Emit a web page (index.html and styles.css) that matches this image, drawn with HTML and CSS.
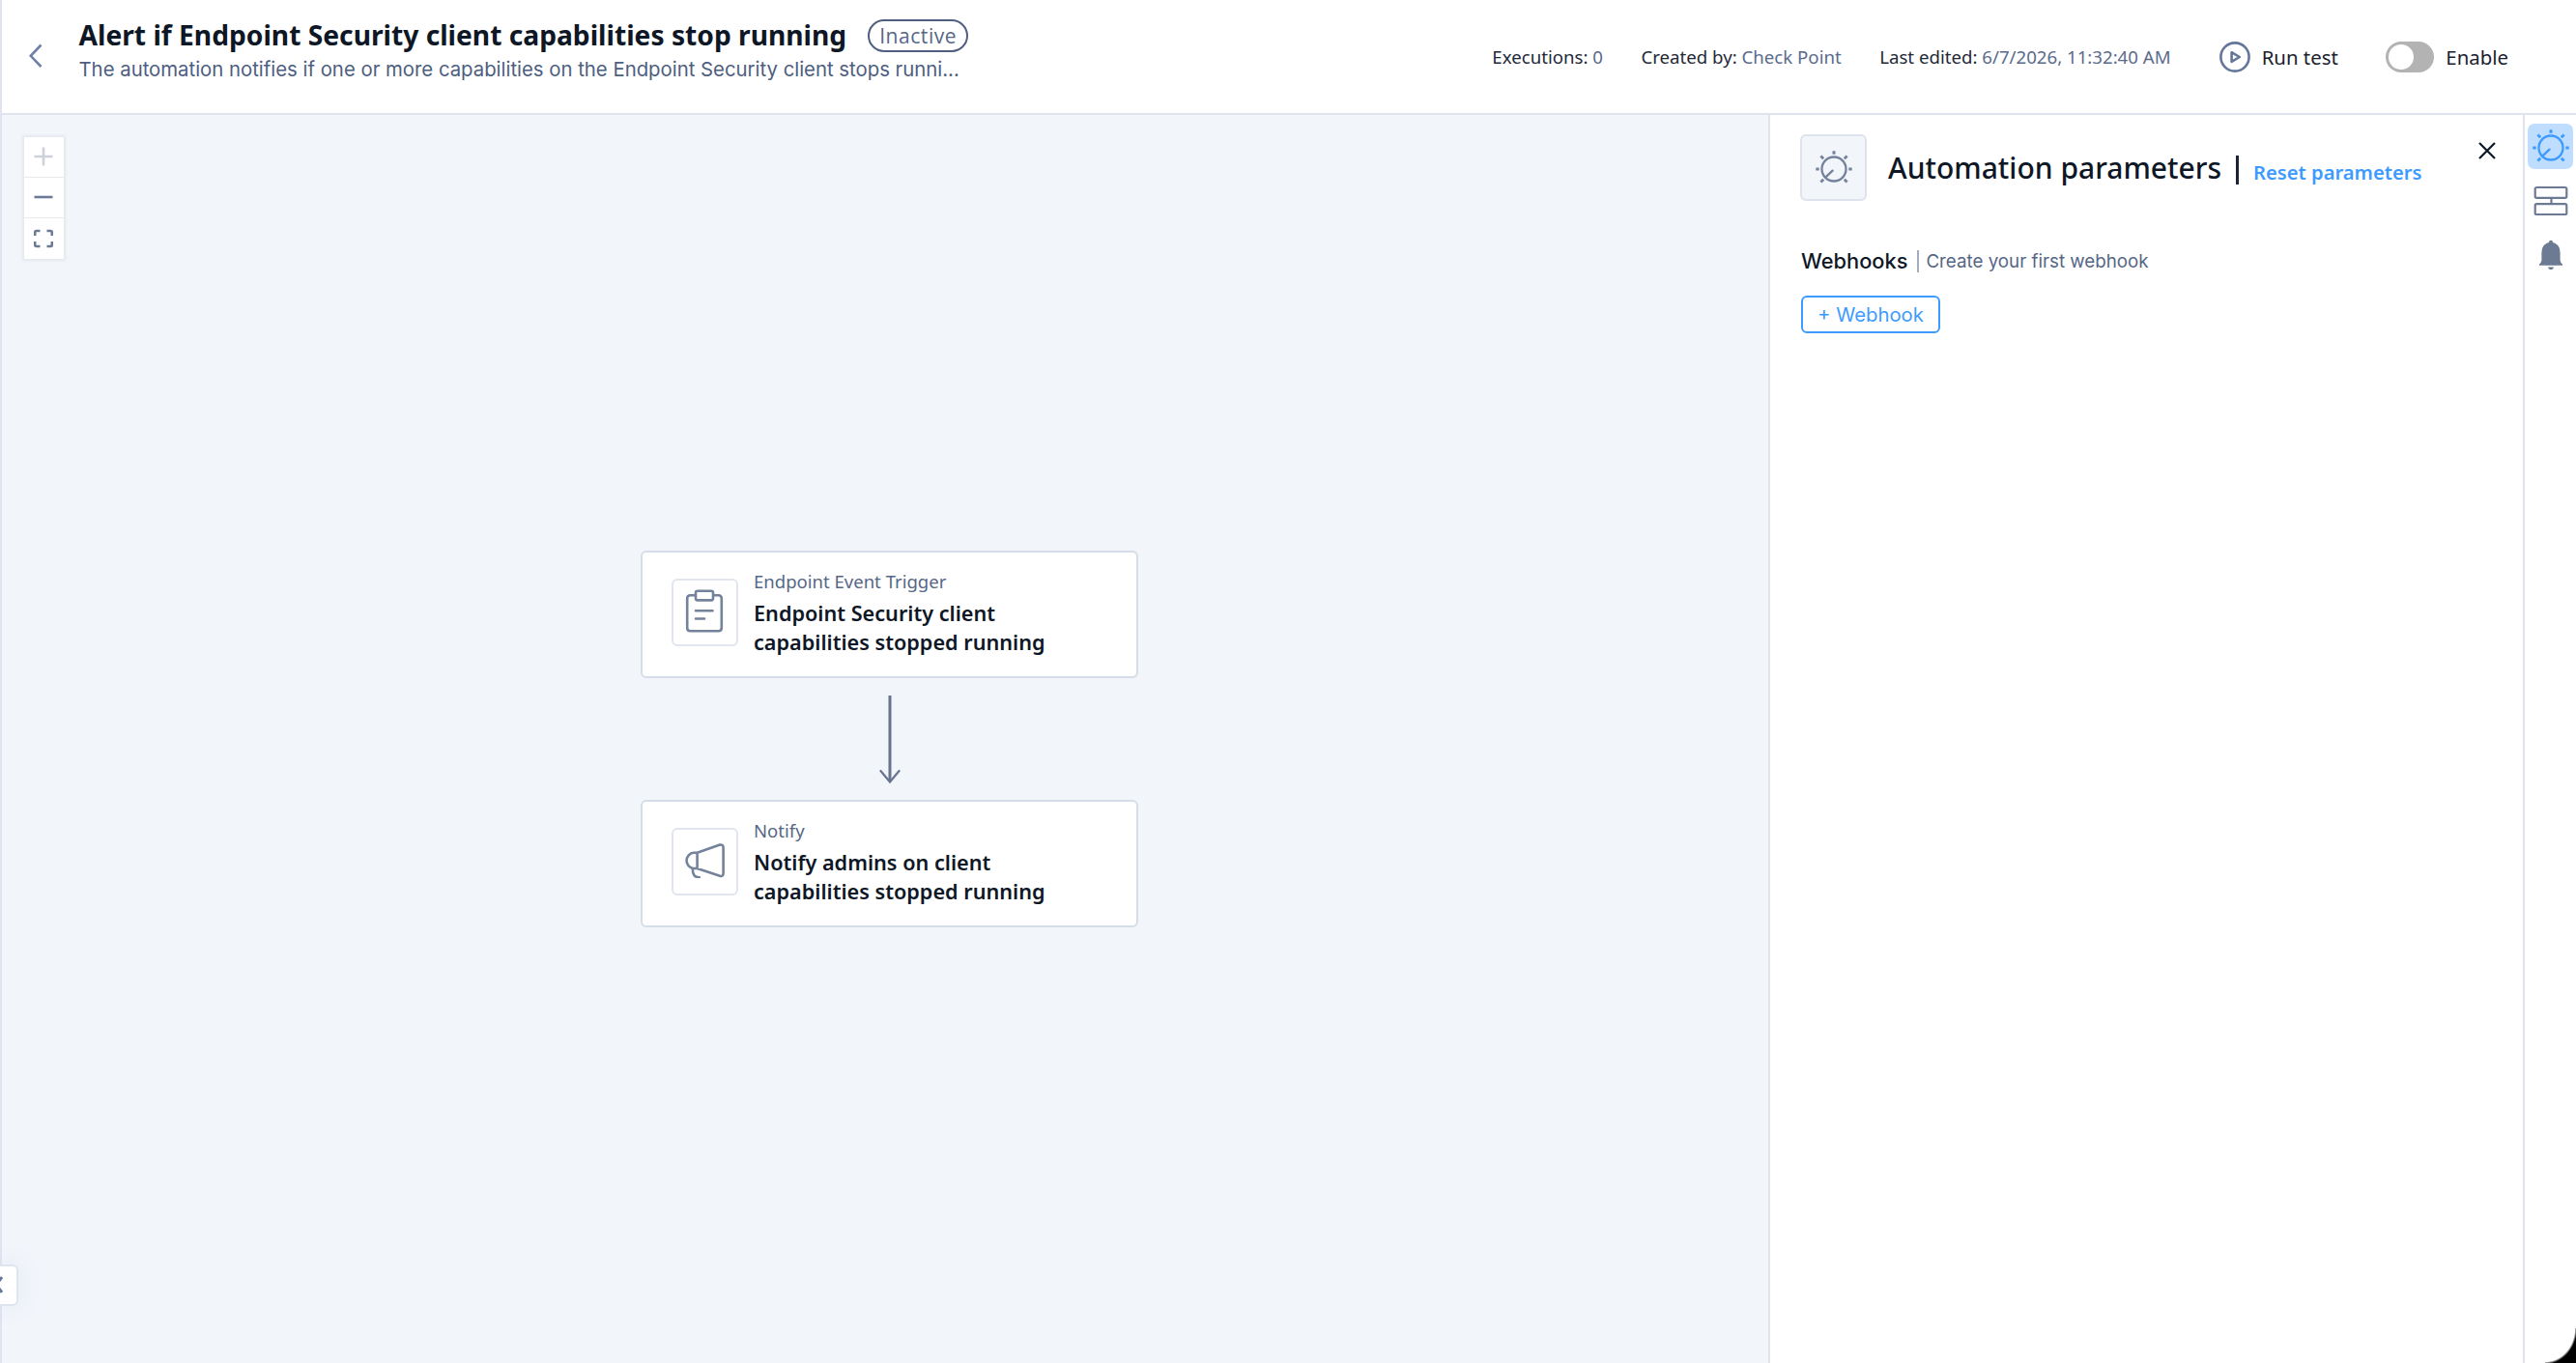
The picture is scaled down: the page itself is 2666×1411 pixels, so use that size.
FILE: index.html
```html
<!DOCTYPE html>
<html lang="en">
<head>
  <meta charset="UTF-8" />
  <meta name="viewport" content="width=device-width, initial-scale=1.0" />
  <title>Alert if Endpoint Security client capabilities stop running</title>
  <link rel="stylesheet" href="styles.css">
</head>
<body>

  <svg class="sprite" width="0" height="0">
    <symbol id="knob" viewBox="0 0 38 34">
      <g fill="none" stroke="currentColor" stroke-width="2.3">
        <circle cx="19" cy="19" r="12.5" />
        <path d="M11 26.8L17.6 20.6" stroke-linecap="round" />
      </g>
      <g fill="currentColor">
        <rect x="17.5" y="0.3" width="3" height="3.4" rx="0.5" />
        <rect x="0.3" y="17.5" width="3.4" height="3" rx="0.5" />
        <rect x="34.3" y="17.5" width="3.4" height="3" rx="0.5" />
      </g>
      <g stroke="currentColor" stroke-width="2.8">
        <path d="M5.4 5.4L8.2 8.2M32.6 5.4L29.8 8.2M5.4 32.6L8.2 29.8M32.6 32.6L29.8 29.8" />
      </g>
    </symbol>
  </svg>

  <div class="app">
    <header class="header">
      <button class="back" aria-label="Back">
        <svg width="14" height="26" viewBox="0 0 14 26"><path d="M12.5 1.5L1.8 12.8L12.5 24" /></svg>
      </button>
      <div class="heading">
        <div class="title-row">
          <h1>Alert if Endpoint Security client capabilities stop running</h1>
          <span class="badge">Inactive</span>
        </div>
        <p class="description">The automation notifies if one or more capabilities on the Endpoint Security client stops runni...</p>
      </div>
      <div class="meta">
        <span>Executions: <b>0</b></span>
        <span>Created by: <b>Check Point</b></span>
        <span>Last edited: <b>6/7/2026, 11:32:40 AM</b></span>
      </div>
      <button class="run">
        <svg width="32" height="32" viewBox="0 0 32 32">
          <circle cx="16" cy="16" r="14.6" />
          <path d="M12.6 11.2L20.8 16L12.6 20.8Z" />
        </svg>
        Run test
      </button>
      <label class="enable"><span class="toggle"></span>Enable</label>
    </header>

    <main class="main">
      <section class="canvas">
        <div class="zoom-controls">
          <button class="disabled" aria-label="Zoom in">
            <svg width="20" height="20" viewBox="0 0 20 20"><path d="M0.5 10H19.5M10 0.5V19.5" /></svg>
          </button>
          <button aria-label="Zoom out">
            <svg width="20" height="20" viewBox="0 0 20 20"><path d="M0.5 10H19.5" /></svg>
          </button>
          <button aria-label="Fit view">
            <svg width="20" height="20" viewBox="0 0 20 20"><path d="M1.2 7V3.6Q1.2 2 2.8 2H6.5M13.5 2H17.2Q18.8 2 18.8 3.6V7M18.8 13V16.4Q18.8 18 17.2 18H13.5M6.5 18H2.8Q1.2 18 1.2 16.4V13" /></svg>
          </button>
        </div>

        <div class="flow">
          <div class="node">
            <div class="node-icon">
              <svg width="40" height="46" viewBox="0 0 40 46">
                <path d="M10.5 6.3H5.5Q2.2 6.3 2.2 9.6V40Q2.2 43.3 5.5 43.3H34.5Q37.8 43.3 37.8 40V9.6Q37.8 6.3 34.5 6.3H29.5" />
                <rect x="11" y="1.8" width="18" height="9.6" rx="1.8" />
                <path d="M11 22.2H28.5M11 30.5H20" stroke-linecap="round" />
              </svg>
            </div>
            <div class="node-text">
              <div class="node-type">Endpoint Event Trigger</div>
              <div class="node-name">Endpoint Security client capabilities stopped running</div>
            </div>
          </div>

          <svg class="arrow" width="24" height="94" viewBox="0 0 24 94">
            <path d="M12 1V90" stroke-width="3" />
            <path d="M2.4 79L12 90.5L21.6 79" stroke-width="2.2" stroke-linecap="round" />
          </svg>

          <div class="node">
            <div class="node-icon">
              <svg width="42" height="36" viewBox="0 0 42 36">
                <path d="M13.6 9.8H9.5A8.2 8.2 0 0 0 9.5 26H13.6ZM13.6 9.8L37 1.6Q40.6 1 40.6 4.4V31Q40.6 34.6 37 33.8L13.6 26" />
                <path d="M8.8 26.2Q8.6 35.6 15.8 35.2" stroke-linecap="round" />
              </svg>
            </div>
            <div class="node-text">
              <div class="node-type">Notify</div>
              <div class="node-name">Notify admins on client capabilities stopped running</div>
            </div>
          </div>
        </div>

        <button class="collapse" aria-label="Expand menu">
          <svg width="6" height="22" viewBox="0 0 6 22"><path d="M-4 11L2 3.2M-4 11L2 18.8" /></svg>
        </button>
      </section>

      <aside class="panel">
        <div class="panel-head">
          <div class="panel-icon"><svg width="38" height="34"><use href="#knob" /></svg></div>
          <h2>Automation parameters</h2>
          <span class="bar"></span>
          <a class="reset">Reset parameters</a>
          <button class="close" aria-label="Close">
            <svg width="18" height="18" viewBox="0 0 18 18"><path d="M1 1L17 17M17 1L1 17" /></svg>
          </button>
        </div>
        <div class="webhooks">
          <h3>Webhooks</h3>
          <span class="hint">Create your first webhook</span>
        </div>
        <button class="add">+ Webhook</button>
      </aside>

      <nav class="rail">
        <button class="rail-item active" aria-label="Parameters"><svg width="38" height="34"><use href="#knob" /></svg></button>
        <button class="rail-item" aria-label="Steps">
          <svg width="36" height="32" viewBox="0 0 36 32" fill="none" stroke="currentColor" stroke-width="2.2">
            <rect x="1.7" y="2" width="32.6" height="10.8" rx="1.6" />
            <rect x="1.7" y="19.2" width="32.6" height="10.8" rx="1.6" />
            <path d="M18.5 12.8V19.2" />
          </svg>
        </button>
        <button class="rail-item" aria-label="Alerts">
          <svg width="26" height="32" viewBox="0 0 26 32" fill="currentColor">
            <path d="M11 3V2.6Q11 0.8 13 0.8T15 2.6V3Q22.6 5 22.6 13.4V21.4Q22.8 23.4 25 25.6V26.8H1V25.6Q3.2 23.4 3.4 21.4V13.4Q3.4 5 11 3Z" />
            <path d="M10 28.6H16Q15.6 31.2 13 31.2T10 28.6Z" />
          </svg>
        </button>
      </nav>
    </main>
    <div class="corner"></div>
  </div>

</body>
</html>
```
FILE: styles.css
```css
* {
  box-sizing: border-box;
}

body {
  margin: 0;
  font-family: "Noto Sans", sans-serif;
  color: #0e1726;
  background: #fff;
}

h1, h2, h3, p {
  margin: 0;
}

button {
  padding: 0;
  border: 0;
  background: none;
  font: inherit;
  color: inherit;
}

svg {
  display: block;
  flex: none;
}

.sprite {
  display: none;
}

.app {
  position: relative;
  display: flex;
  flex-direction: column;
  width: 2666px;
  height: 1411px;
  overflow: hidden;
}

/* header */
.header {
  display: flex;
  align-items: center;
  height: 119px;
  flex: none;
  padding: 0 70px 0 28px;
  border-left: 2px solid #dfe4ef;
  border-bottom: 2px solid #dfe4ee;
  white-space: nowrap;
}

.back svg {
  margin-bottom: 2px;
  fill: none;
  stroke: #7081a6;
  stroke-width: 2.6;
}

.heading {
  align-self: flex-start;
  margin-left: 37.5px;
  padding-top: 17px;
}

.title-row {
  display: flex;
  align-items: center;
  height: 39px;
}

h1 {
  font-size: 28.2px;
  font-weight: 700;
  line-height: 39px;
}

.badge {
  display: flex;
  align-items: center;
  justify-content: center;
  width: 104px;
  height: 34px;
  margin-left: 22px;
  border: 2px solid #4e5f80;
  border-radius: 17px;
  font-family: "Open Sans", sans-serif;
  font-size: 21px;
  letter-spacing: 0.55px;
  color: #566786;
}

.description {
  font-family: Inter, sans-serif;
  font-size: 20.33px;
  line-height: 32px;
  color: #4d5e7f;
}

.meta {
  display: flex;
  gap: 39.5px;
  margin-left: auto;
  font-size: 18.65px;
  color: #1f2937;
}

.meta b {
  font-weight: 400;
  color: #5a6b8c;
}

.run,
.enable {
  display: flex;
  align-items: center;
  gap: 12px;
  font-size: 20.4px;
  color: #1a2230;
}

.run {
  margin-left: 50px;
}

.run svg {
  fill: none;
  stroke: #64769a;
  stroke-width: 2.6;
  stroke-linejoin: round;
}

.enable {
  margin-left: 49.5px;
}

.toggle {
  width: 50px;
  height: 32px;
  padding: 3px;
  border-radius: 16px;
  background: #b3b3b3;
}

.toggle::before {
  content: "";
  display: block;
  width: 26px;
  height: 26px;
  border-radius: 50%;
  background: #fff;
}

.main {
  display: flex;
  flex: 1;
  min-height: 0;
}

/* canvas */
.canvas {
  position: relative;
  flex: 1;
  border-left: 2px solid #dfe4ef;
  background: #f2f5fa;
}

.zoom-controls {
  position: absolute;
  left: 23px;
  top: 23px;
  width: 41px;
  background: #fff;
  box-shadow: 0 0 3px 2px rgba(0, 0, 0, 0.06);
}

.zoom-controls button {
  display: flex;
  align-items: center;
  justify-content: center;
  width: 100%;
  height: 42px;
  padding: 0 1px 1px 0;
  border-bottom: 1px solid #e9eaec;
}

.zoom-controls button:last-child {
  border-bottom: 0;
}

.zoom-controls svg {
  fill: none;
  stroke: #6b7a95;
  stroke-width: 2.6;
}

.zoom-controls .disabled svg {
  stroke: #ccd1da;
}

.flow {
  position: absolute;
  left: 661px;
  top: 451px;
  display: flex;
  flex-direction: column;
  align-items: center;
}

.node {
  display: flex;
  width: 515px;
  height: 132px;
  padding: 20px 30px;
  border: 2px solid #d5dde8;
  border-radius: 6px;
  background: #fff;
}

.node-icon {
  display: flex;
  align-items: center;
  justify-content: center;
  width: 69px;
  height: 70px;
  margin-top: 7px;
  border: 2px solid #e0e5ef;
  border-radius: 6px;
}

.node-icon svg {
  margin: 0 1px 2px 0;
  fill: none;
  stroke: #74829c;
  stroke-width: 2.6;
  stroke-linejoin: round;
}

.node-text {
  width: 320px;
  margin-left: 16px;
  margin-top: -4px;
}

.node-type {
  font-size: 18.55px;
  line-height: 28px;
  color: #566786;
}

.node-name {
  margin-top: 4px;
  font-size: 21.65px;
  font-weight: 600;
  line-height: 30px;
}

.arrow {
  margin: 17px 0 15px;
  fill: none;
  stroke: #66748f;
}

.collapse {
  position: absolute;
  left: -2px;
  top: 1190px;
  display: flex;
  align-items: center;
  width: 19px;
  height: 43px;
  border: 2px solid #dfe4ee;
  border-left: 0;
  border-radius: 0 6px 6px 0;
  background: #fff;
  box-shadow: 0 0 24px rgba(120, 150, 200, 0.12);
}

.collapse svg {
  margin-bottom: 1px;
  fill: none;
  stroke: #64769a;
  stroke-width: 3;
}

/* side panel */
.panel {
  width: 781px;
  padding: 20px 28px 0 31px;
  border-left: 2px solid #dfe4ee;
}

.panel-head {
  display: flex;
  height: 69px;
}

.panel-icon {
  display: flex;
  align-items: center;
  justify-content: center;
  width: 69px;
  height: 69px;
  padding: 0 0 2px 1px;
  border: 2px solid #dde2ec;
  border-radius: 6px;
  background: #f2f5fa;
  color: #74829c;
}

h2 {
  margin-left: 22px;
  font-size: 30px;
  font-weight: 500;
  line-height: 69px;
}

.bar {
  width: 3px;
  height: 30px;
  margin: 22px 0 0 15px;
  background: #1b2433;
}

.reset {
  margin-left: 15px;
  padding-top: 25px;
  font-size: 20.2px;
  font-weight: 600;
  line-height: 28px;
  color: #3d9bff;
}

.close {
  align-self: flex-start;
  margin: 8px 0 0 auto;
}

.close svg {
  stroke: #0e1726;
  stroke-width: 2.2;
}

.webhooks {
  display: flex;
  align-items: center;
  margin-top: 47px;
  height: 30px;
  font-family: Inter, sans-serif;
}

h3 {
  margin-left: 1px;
  font-size: 21.8px;
  font-weight: 500;
}

.hint {
  margin-left: 10px;
  padding-left: 7px;
  border-left: 2px solid #a4aebf;
  font-size: 18.75px;
  line-height: 23px;
  color: #566786;
}

.add {
  display: block;
  width: 144px;
  height: 39px;
  margin: 21px 0 0 1px;
  border: 2px solid #3d9bff;
  border-radius: 6px;
  font-family: Inter, sans-serif;
  font-size: 20.3px;
  color: #3d9bff;
}

.rail {
  display: flex;
  flex-direction: column;
  align-items: center;
  gap: 9px;
  width: 55px;
  padding-top: 9px;
  border-left: 2px solid #dfe4ee;
}

.rail-item {
  display: flex;
  align-items: center;
  justify-content: center;
  width: 47px;
  height: 47px;
  color: #6d7a93;
}

.active {
  padding-bottom: 2px;
  border-radius: 7px;
  background: #bfdeff;
  color: #3d9bff;
}

.corner {
  position: absolute;
  right: 0;
  bottom: 0;
  width: 32px;
  height: 36px;
  background: radial-gradient(ellipse 32px 36px at 0 0, transparent 96%, #000 103%);
}
```
